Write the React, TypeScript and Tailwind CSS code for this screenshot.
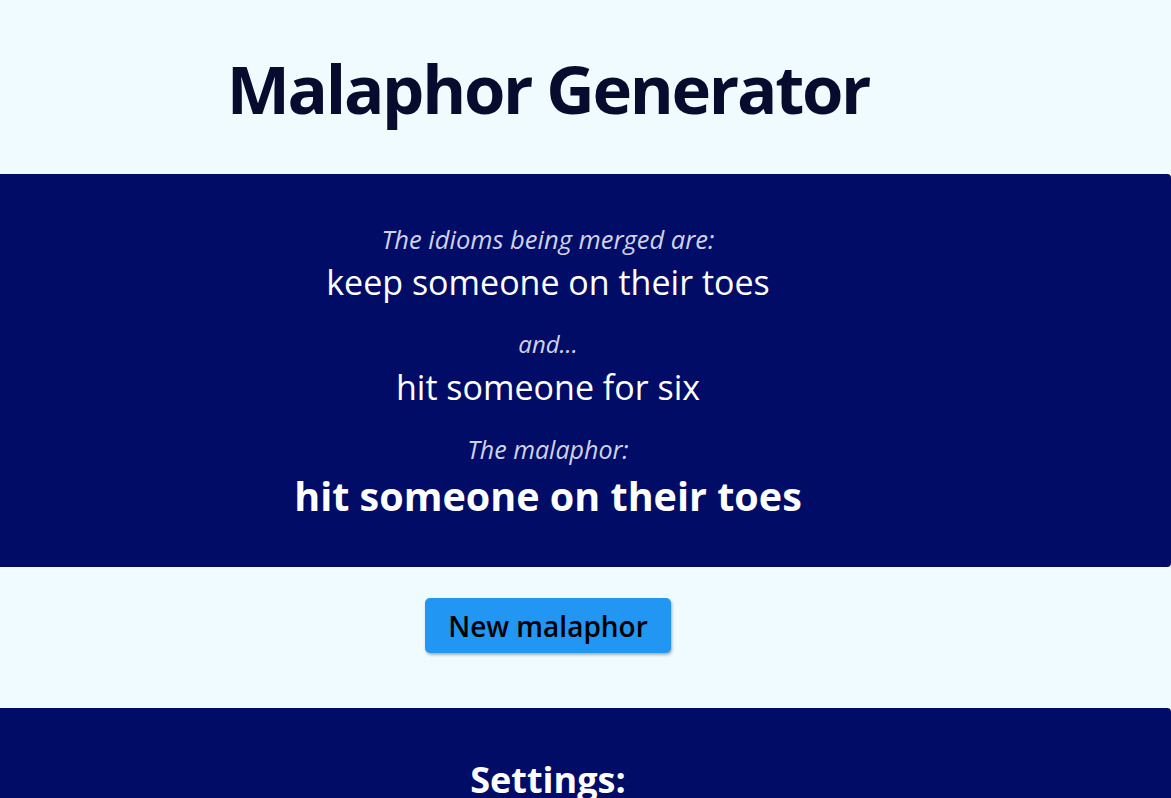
import React from 'react';

const idioms = ['keep someone on their toes', 'hit someone for six'];
const malaphor = 'hit someone on their toes';

const App: React.FC = () => {
    return (
        <div className="min-h-screen bg-[#f0fbff] font-['Open_Sans',sans-serif] overflow-hidden">
            <h1 className="pr-[75px] pt-[49px] pb-[47px] text-center text-[67px] leading-[78px] tracking-[-2.3px] font-bold text-[#070b2e]">
                Malaphor Generator
            </h1>

            {/* Idioms panel */}
            <section className="bg-[#000c66] rounded-r-[4px] pr-[75px] pt-[49px] pb-[45px] text-center text-white">
                <p className="italic text-[25.5px] leading-[32px] text-[#cfd3ea]">The idioms being merged are:</p>
                <p className="mt-[5px] text-[34px] leading-[44px]">{idioms[0]}</p>
                <p className="mt-[24px] italic text-[24px] leading-[32px] text-[#cfd3ea]">and...</p>
                <p className="mt-[5px] text-[34px] leading-[44px]">{idioms[1]}</p>
                <p className="mt-[24px] italic text-[25px] leading-[32px] text-[#cfd3ea]">The malaphor:</p>
                <p className="mt-[5px] text-[39.5px] leading-[52px] font-bold">{malaphor}</p>
            </section>

            <div className="flex justify-center pr-[75px] pt-[31px] pb-[55px]">
                <button className="w-[246px] h-[55px] rounded-[5px] bg-[#2196f3] text-[28px] font-semibold text-black shadow-[1px_2px_3px_rgba(0,0,0,0.3)]">
                    New malaphor
                </button>
            </div>

            {/* Settings panel */}
            <section className="bg-[#000c66] rounded-r-[4px] pr-[75px] pt-[50px] pb-[40px] text-center text-white">
                <h2 className="text-[36px] leading-[44px] font-bold">Settings:</h2>
            </section>
        </div>
    );
};

export default App;
